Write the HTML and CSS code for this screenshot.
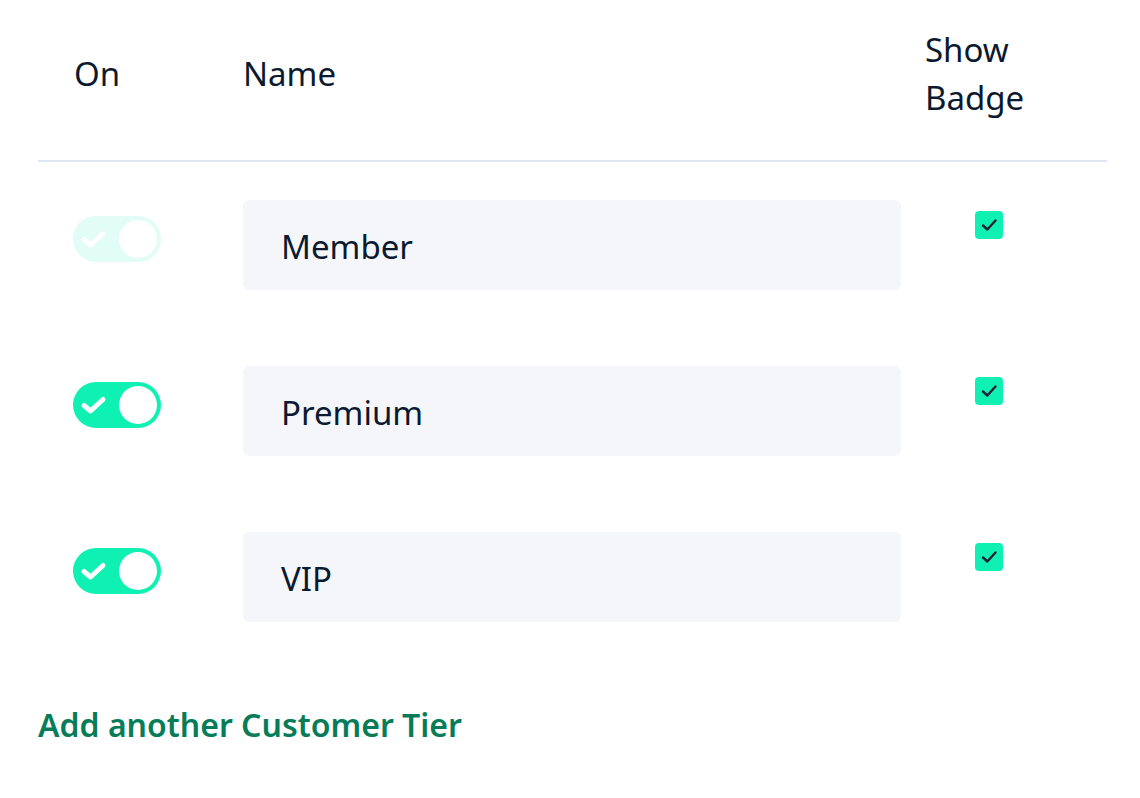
FILE: index.html
```html
<!DOCTYPE html>
<html lang="en">
<head>
<meta charset="utf-8">
<title>Customer Tiers</title>
<link rel="stylesheet" href="styles.css">
</head>
<body>
<div class="tiers">
  <div class="grid head">
    <div class="cell-on">On</div>
    <div class="cell-name">Name</div>
    <div class="cell-badge">Show<br>Badge</div>
  </div>
  <div class="grid row">
    <div class="cell-on">
      <span class="toggle off">
        <svg class="tick" viewBox="0 0 28 20" width="28" height="20"><path d="M4 10.5 L10.5 16 L23 4.5" fill="none" stroke="#fff" stroke-width="5" stroke-linecap="round" stroke-linejoin="round"/></svg>
        <span class="knob"></span>
      </span>
    </div>
    <div class="cell-name"><div class="input">Member</div></div>
    <div class="cell-badge">
      <span class="check"><svg viewBox="0 0 28 28" width="28" height="28"><path d="M8 14.5 L12.3 18.5 L20.5 9.5" fill="none" stroke="#1c2233" stroke-width="2.4" stroke-linecap="round" stroke-linejoin="round"/></svg></span>
    </div>
  </div>
  <div class="grid row">
    <div class="cell-on">
      <span class="toggle">
        <svg class="tick" viewBox="0 0 28 20" width="28" height="20"><path d="M4 10.5 L10.5 16 L23 4.5" fill="none" stroke="#fff" stroke-width="5" stroke-linecap="round" stroke-linejoin="round"/></svg>
        <span class="knob"></span>
      </span>
    </div>
    <div class="cell-name"><div class="input">Premium</div></div>
    <div class="cell-badge">
      <span class="check"><svg viewBox="0 0 28 28" width="28" height="28"><path d="M8 14.5 L12.3 18.5 L20.5 9.5" fill="none" stroke="#1c2233" stroke-width="2.4" stroke-linecap="round" stroke-linejoin="round"/></svg></span>
    </div>
  </div>
  <div class="grid row">
    <div class="cell-on">
      <span class="toggle">
        <svg class="tick" viewBox="0 0 28 20" width="28" height="20"><path d="M4 10.5 L10.5 16 L23 4.5" fill="none" stroke="#fff" stroke-width="5" stroke-linecap="round" stroke-linejoin="round"/></svg>
        <span class="knob"></span>
      </span>
    </div>
    <div class="cell-name"><div class="input">VIP</div></div>
    <div class="cell-badge">
      <span class="check"><svg viewBox="0 0 28 28" width="28" height="28"><path d="M8 14.5 L12.3 18.5 L20.5 9.5" fill="none" stroke="#1c2233" stroke-width="2.4" stroke-linecap="round" stroke-linejoin="round"/></svg></span>
    </div>
  </div>
  <a class="add" href="#">Add another Customer Tier</a>
</div>
</body>
</html>
```
FILE: styles.css
```css
html, body {
  margin: 0;
  padding: 0;
  background: #ffffff;
}
body {
  font-family: "Noto Sans", "Open Sans", sans-serif;
  font-size: 33px;
  line-height: 48px;
  color: #0b1a30;
}
.tiers {
  margin: 0 33px 0 38px;
}
.grid {
  display: grid;
  grid-template-columns: 181px 658px 1fr;
  column-gap: 24px;
}
.head {
  padding: 26px 0 38px;
  align-items: center;
  border-bottom: 2px solid #dfe6f1;
}
.head .cell-on {
  padding-left: 36px;
}
.row {
  padding: 38px 0 38px;
  align-items: start;
}
.row .cell-on {
  padding-left: 35px;
  padding-top: 16px;
}
.toggle {
  display: flex;
  align-items: center;
  position: relative;
  width: 88px;
  height: 46px;
  border-radius: 23px;
  background: #0ff0b3;
}
.toggle.off {
  opacity: 0.12;
}
.tick {
  margin-left: 7px;
  display: block;
}
.knob {
  position: absolute;
  right: 4px;
  top: 4px;
  width: 38px;
  height: 38px;
  border-radius: 50%;
  background: #ffffff;
}
.input {
  height: 90px;
  box-sizing: border-box;
  background: #f5f6fa;
  border-radius: 6px;
  padding: 3px 0 0 38px;
  display: flex;
  align-items: center;
}
.row .cell-badge {
  padding-left: 50px;
  padding-top: 11px;
}
.check {
  display: block;
  width: 28px;
  height: 28px;
  border-radius: 4px;
  background: #0ff0b3;
}
.check svg {
  display: block;
}
.add {
  display: inline-block;
  margin-top: 41px;
  font-size: 32px;
  color: #067d58;
  font-weight: 600;
  text-decoration: none;
}
```
